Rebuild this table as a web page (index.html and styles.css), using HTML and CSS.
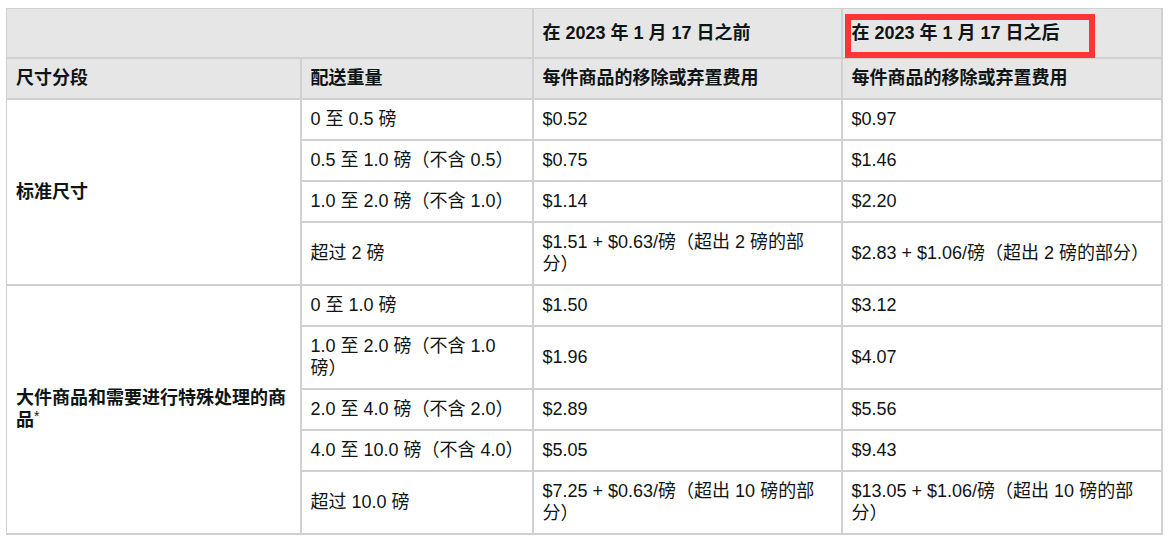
FILE: index.html
```html
<!DOCTYPE html>
<html lang="zh-CN">
<head>
<meta charset="utf-8">
<link rel="stylesheet" href="styles.css">
</head>
<body>
<div class="wrap">
<table class="fees">
  <colgroup>
    <col class="c1"><col class="c2"><col class="c3"><col class="c4">
  </colgroup>
  <thead>
    <tr class="top">
      <th colspan="2" class="first"></th>
      <th>在 2023 年 1 月 17 日之前</th>
      <th>在 2023 年 1 月 17 日之后</th>
    </tr>
    <tr>
      <th class="first">尺寸分段</th>
      <th>配送重量</th>
      <th>每件商品的移除或弃置费用</th>
      <th>每件商品的移除或弃置费用</th>
    </tr>
  </thead>
  <tbody>
    <tr>
      <td rowspan="4" class="first label">标准尺寸</td>
      <td>0 至 0.5 磅</td>
      <td class="old">$0.52</td>
      <td>$0.97</td>
    </tr>
    <tr>
      <td>0.5 至 1.0 磅（不含 0.5）</td>
      <td class="old">$0.75</td>
      <td>$1.46</td>
    </tr>
    <tr>
      <td>1.0 至 2.0 磅（不含 1.0）</td>
      <td class="old">$1.14</td>
      <td>$2.20</td>
    </tr>
    <tr>
      <td>超过 2 磅</td>
      <td class="old">$1.51 + $0.63/磅（超出 2 磅的部分）</td>
      <td>$2.83 + $1.06/磅（超出 2 磅的部分）</td>
    </tr>
    <tr>
      <td rowspan="5" class="first label">大件商品和需要进行特殊处理的商品<span class="star">*</span></td>
      <td>0 至 1.0 磅</td>
      <td class="old">$1.50</td>
      <td>$3.12</td>
    </tr>
    <tr>
      <td>1.0 至 2.0 磅（不含 1.0 磅）</td>
      <td class="old">$1.96</td>
      <td>$4.07</td>
    </tr>
    <tr>
      <td>2.0 至 4.0 磅（不含 2.0）</td>
      <td class="old">$2.89</td>
      <td>$5.56</td>
    </tr>
    <tr>
      <td>4.0 至 10.0 磅（不含 4.0）</td>
      <td class="old">$5.05</td>
      <td>$9.43</td>
    </tr>
    <tr>
      <td>超过 10.0 磅</td>
      <td class="old">$7.25 + $0.63/磅（超出 10 磅的部分）</td>
      <td>$13.05 + $1.06/磅（超出 10 磅的部分）</td>
    </tr>
  </tbody>
</table>
<div class="highlight"></div>
</div>
</body>
</html>
```

FILE: styles.css
```css
html, body {
  margin: 0;
  padding: 0;
  background: #ffffff;
}

body {
  font-family: "Liberation Sans", "Noto Sans CJK SC", Arial, sans-serif;
  font-size: 18px;
  color: #0f1414;
}

.wrap {
  position: relative;
  margin: 8px 0 0 6px;
  width: 1155px;
}

.fees {
  border-collapse: collapse;
  table-layout: fixed;
  width: 1155px;
  line-height: 22px;
}

.c1 { width: 294px; }
.c2 { width: 232px; }
.c3 { width: 309px; }
.c4 { width: 320px; }

.fees th,
.fees td {
  border: 2px solid #d0d0d0;
  padding: 8.5px 6px 8.5px 9px;
  text-align: left;
  vertical-align: middle;
}

.fees td.old {
  padding-right: 16px;
}

.fees th {
  background: #e6e6e6;
  font-weight: bold;
}

.fees tr.top th {
  border-top-width: 1px;
  padding-top: 12.75px;
  padding-bottom: 12.75px;
}

.fees .first {
  border-left-width: 1px;
}

.fees td {
  background: #ffffff;
}

.fees td.label {
  font-weight: bold;
}

.star {
  font-size: 14px;
  font-weight: normal;
  line-height: 0;
  vertical-align: 5px;
}

.highlight {
  position: absolute;
  left: 839px;
  top: 6px;
  width: 250px;
  height: 44px;
  box-sizing: border-box;
  border: 6px solid #ff3535;
}
```
